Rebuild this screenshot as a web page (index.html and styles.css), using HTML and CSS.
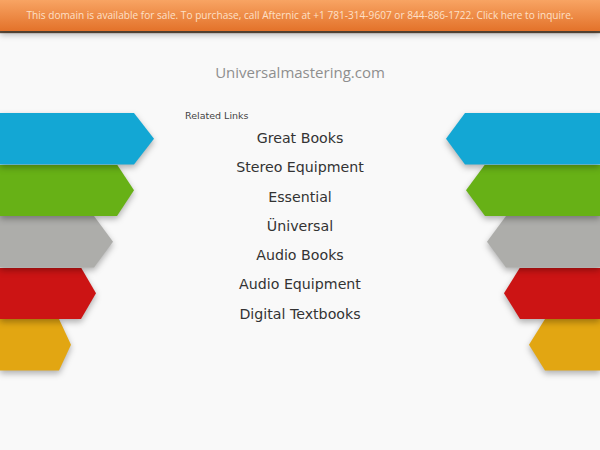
FILE: index.html
```html
<!DOCTYPE html>
<html>
<head>
<meta charset="utf-8">
<link rel="stylesheet" href="styles.css">
</head>
<body>
<div class="banner">This domain is available for sale. To purchase, call Afternic at +1 781-314-9607 or 844-886-1722. Click here to inquire.</div>
<div class="title">Universalmastering.com</div>
<div class="main">
  <div class="side left">
    <div class="arrow a1"><div class="shape blue"></div></div>
    <div class="arrow a2"><div class="shape green"></div></div>
    <div class="arrow a3"><div class="shape gray"></div></div>
    <div class="arrow a4"><div class="shape red"></div></div>
    <div class="arrow a5"><div class="shape yellow"></div></div>
  </div>
  <div class="center">
    <div class="related">Related Links</div>
    <ul class="links">
      <li>Great Books</li>
      <li>Stereo Equipment</li>
      <li>Essential</li>
      <li>Üniversal</li>
      <li>Audio Books</li>
      <li>Audio Equipment</li>
      <li>Digital Textbooks</li>
    </ul>
  </div>
  <div class="side right">
    <div class="arrow a1"><div class="shape blue"></div></div>
    <div class="arrow a2"><div class="shape green"></div></div>
    <div class="arrow a3"><div class="shape gray"></div></div>
    <div class="arrow a4"><div class="shape red"></div></div>
    <div class="arrow a5"><div class="shape yellow"></div></div>
  </div>
</div>
</body>
</html>
```

FILE: styles.css
```css
html, body {
  margin: 0;
  padding: 0;
  background: #f9f9f9;
  height: 100%;
  overflow: hidden;
}

.banner {
  height: 31px;
  line-height: 31px;
  text-align: center;
  font-family: "Open Sans", sans-serif;
  font-size: 10.1px;
  color: #fde0c8;
  background: linear-gradient(#f8a463, #e3722a);
  box-shadow: 0 2px 1px rgba(40, 20, 0, 0.75), 0 4px 6px rgba(0, 0, 0, 0.25);
  white-space: nowrap;
  position: relative;
  z-index: 10;
}

.title {
  margin-top: 31px;
  height: 20px;
  line-height: 20px;
  text-align: center;
  font-family: "Open Sans", sans-serif;
  font-size: 15px;
  color: #8e8e8e;
}

.main {
  margin-top: 31px;
  display: flex;
}

.side {
  width: 185px;
  display: flex;
  flex-direction: column;
}

.side.left { align-items: flex-start; }
.side.right { align-items: flex-end; }

.arrow {
  height: 51.5px;
  position: relative;
  filter: drop-shadow(0 3px 3px rgba(0, 0, 0, 0.3));
}

.a1 { width: 154px; z-index: 5; }
.a2 { width: 134px; z-index: 4; }
.a3 { width: 113px; z-index: 3; }
.a4 { width: 96px; z-index: 2; }
.a5 { width: 71px; z-index: 1; }

.shape {
  width: 100%;
  height: 100%;
}

.left .a1 .shape { clip-path: polygon(0 0, calc(100% - 20px) 0, 100% 50%, calc(100% - 20px) 100%, 0 100%); }
.left .a2 .shape { clip-path: polygon(0 0, calc(100% - 17px) 0, 100% 50%, calc(100% - 17px) 100%, 0 100%); }
.left .a3 .shape { clip-path: polygon(0 0, calc(100% - 19px) 0, 100% 50%, calc(100% - 19px) 100%, 0 100%); }
.left .a4 .shape { clip-path: polygon(0 0, calc(100% - 15px) 0, 100% 50%, calc(100% - 15px) 100%, 0 100%); }
.left .a5 .shape { clip-path: polygon(0 0, calc(100% - 12px) 0, 100% 50%, calc(100% - 12px) 100%, 0 100%); }

.right .a1 .shape { clip-path: polygon(19px 0, 100% 0, 100% 100%, 19px 100%, 0 50%); }
.right .a2 .shape { clip-path: polygon(19px 0, 100% 0, 100% 100%, 19px 100%, 0 50%); }
.right .a3 .shape { clip-path: polygon(19px 0, 100% 0, 100% 100%, 19px 100%, 0 50%); }
.right .a4 .shape { clip-path: polygon(16px 0, 100% 0, 100% 100%, 16px 100%, 0 50%); }
.right .a5 .shape { clip-path: polygon(16px 0, 100% 0, 100% 100%, 16px 100%, 0 50%); }

.blue { background: #13a7d4; }
.green { background: #67b116; }
.gray { background: #adadaa; }
.red { background: #cc1414; }
.yellow { background: #e2a612; }

.center {
  width: 230px;
  font-family: "DejaVu Sans", sans-serif;
  color: #333;
}

.related {
  font-size: 9.5px;
  line-height: 10px;
  margin-top: -2px;
  color: #444;
}

.links {
  list-style: none;
  margin: 3px 0 0 0;
  padding: 0;
  text-align: center;
}

.links li {
  font-size: 14.2px;
  line-height: 29.3px;
  color: #333;
}
```
